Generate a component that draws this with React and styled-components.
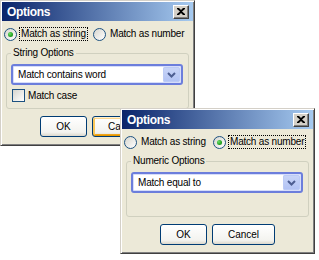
import React from 'react';
import styled, { createGlobalStyle } from 'styled-components';

const Global = createGlobalStyle`
  html, body { margin: 0; padding: 0; background: #fff; }
  body { font-family: "Liberation Sans", Arial, sans-serif; }
`;

const Desktop = styled.div`
  position: relative;
  width: 319px;
  height: 260px;
  overflow: hidden;
  background: #fff;
`;

const Win = styled.div`
  position: absolute;
  left: ${p => p.$x}px;
  top: ${p => p.$y}px;
  width: 195px;
  height: 146px;
  box-sizing: border-box;
  padding: 1px;
  background: #ECE9D8;
  border: 1px solid;
  border-color: #D4D0C8 #404040 #404040 #D4D0C8;
  box-shadow: inset 1px 1px #fff, inset -1px -1px #808080;
  display: flex;
  flex-direction: column;
  font-family: "Liberation Sans", Arial, sans-serif;
  font-size: 10px;
  letter-spacing: -0.2px;
  color: #000;
`;

const TitleBar = styled.div`
  height: 19px;
  flex: none;
  display: flex;
  align-items: center;
  justify-content: space-between;
  padding: 0 4px 0 5px;
  background: linear-gradient(to right, #0A246A, #A6CAF0);
`;

const Title = styled.span`
  color: #fff;
  font-weight: bold;
  font-size: 12px;
  letter-spacing: -0.3px;
`;

const CloseBtn = styled.div`
  width: 16px;
  height: 14px;
  box-sizing: border-box;
  background: #D4D0C8;
  border: 1px solid;
  border-color: #fff #404040 #404040 #fff;
  box-shadow: inset -1px -1px #808080;
  display: flex;
  align-items: center;
  justify-content: center;
`;

const Body = styled.div`
  flex: 1;
  display: flex;
  flex-direction: column;
  padding: 6px 2px 0 2px;
`;

const RadioRow = styled.div`
  display: grid;
  grid-template-columns: 89px auto;
  height: 14px;
`;

const RadioItem = styled.div`
  display: flex;
  align-items: center;
  gap: 2px;
`;

const RadioCircle = styled.span`
  flex: none;
  width: 13px;
  height: 13px;
  box-sizing: border-box;
  border-radius: 50%;
  border: 1px solid #1C5180;
  background: linear-gradient(135deg, #D6D5CE, #fff);
  display: flex;
  align-items: center;
  justify-content: center;
  &::after {
    content: '';
    display: ${p => (p.$checked ? 'block' : 'none')};
    width: 5px;
    height: 5px;
    border-radius: 50%;
    background: radial-gradient(circle at 35% 35%, #6CE06A, #21A121 60%, #178417);
  }
`;

const Label = styled.span`
  line-height: 12px;
  padding: 0 1px;
  border: 1px dotted ${p => (p.$focus ? '#000' : 'transparent')};
  white-space: nowrap;
`;

const Group = styled.fieldset`
  margin: 6px 2px 0 2px;
  padding: 5px 5px 0 4px;
  height: 62px;
  box-sizing: border-box;
  border: 1px solid #D0D0BF;
  border-radius: 3px;
  min-inline-size: 0;
`;

const Legend = styled.legend`
  padding: 0 2px;
  line-height: 12px;
  color: #000;
`;

const Combo = styled.div`
  height: 21px;
  box-sizing: border-box;
  border: 2px solid #6C7EDC;
  border-radius: 3px;
  background: #fff;
  box-shadow: inset 0 0 0 1px #D6DDFA;
  display: flex;
  align-items: stretch;
`;

const ComboText = styled.span`
  flex: 1;
  display: flex;
  align-items: center;
  padding-left: 5px;
`;

const ComboBtn = styled.span`
  width: 17px;
  margin: 1px 1px 1px 0;
  border-radius: 2px;
  background: linear-gradient(#CAD6F8, #B1C2F4);
  box-shadow: inset 0 0 0 1px #BCCBF6;
  display: flex;
  align-items: center;
  justify-content: center;
`;

const CheckRow = styled.div`
  display: flex;
  align-items: center;
  gap: 3px;
  margin: 4px 0 0 1px;
`;

const CheckBox = styled.span`
  width: 13px;
  height: 13px;
  box-sizing: border-box;
  border: 1px solid #1C5180;
  background: linear-gradient(135deg, #D6D5CE, #fff);
`;

const Buttons = styled.div`
  display: flex;
  justify-content: center;
  gap: 5px;
  margin-top: 7px;
`;

const Button = styled.div`
  width: ${p => p.$w}px;
  height: 21px;
  box-sizing: border-box;
  border: 1px solid #003C74;
  border-radius: 3px;
  background: linear-gradient(#FFFFFF, #F3F3EF 80%, #DCD8CC);
  box-shadow: ${p => (p.$hot ? 'inset 0 1px #FFF0CF, inset 0 -1px #E59700, inset 2px 0 #F9C75A, inset -2px 0 #F5B23B, inset 0 2px #FCD78C, inset 0 -2px #F0A51C' : 'none')};
  display: flex;
  align-items: center;
  justify-content: center;
  letter-spacing: 0;
`;

const CloseGlyph = () => (
  <svg width="8" height="7" viewBox="0 0 8 7">
    <path d="M0 0h2l2 2 2-2h2v1L5 3.5 8 6v1H6L4 5 2 7H0V6l3-2.5L0 1z" fill="#000" />
  </svg>
);

const Chevron = () => (
  <svg width="9" height="6" viewBox="0 0 9 6">
    <path d="M1 1 L4.5 4.5 L8 1" fill="none" stroke="#4D5E92" strokeWidth="2" />
  </svg>
);

const Dialog = ({ x, y, mode }) => {
  const isString = mode === 'string';
  return (
    <Win $x={x} $y={y}>
      <TitleBar>
        <Title>Options</Title>
        <CloseBtn><CloseGlyph /></CloseBtn>
      </TitleBar>
      <Body>
        <RadioRow>
          <RadioItem>
            <RadioCircle $checked={isString} />
            <Label $focus={isString}>Match as string</Label>
          </RadioItem>
          <RadioItem>
            <RadioCircle $checked={!isString} />
            <Label $focus={!isString}>Match as number</Label>
          </RadioItem>
        </RadioRow>
        <Group>
          <Legend>{isString ? 'String Options' : 'Numeric Options'}</Legend>
          <Combo>
            <ComboText>{isString ? 'Match contains word' : 'Match equal to'}</ComboText>
            <ComboBtn><Chevron /></ComboBtn>
          </Combo>
          {isString && (
            <CheckRow>
              <CheckBox />
              <span>Match case</span>
            </CheckRow>
          )}
        </Group>
        <Buttons>
          <Button $w={47}>OK</Button>
          <Button $w={63} $hot={isString}>Cancel</Button>
        </Buttons>
      </Body>
    </Win>
  );
};

export default function App() {
  return (
    <Desktop>
      <Global />
      <Dialog x={0} y={0} mode="string" />
      <Dialog x={120} y={108} mode="number" />
    </Desktop>
  );
}
